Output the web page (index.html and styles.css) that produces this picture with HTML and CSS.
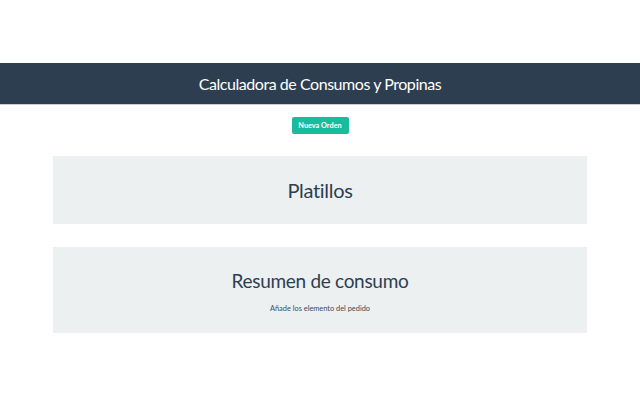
FILE: index.html
```html
<!DOCTYPE html>
<html lang="es">
<head>
<meta charset="utf-8">
<title>Calculadora</title>
<link rel="stylesheet" href="styles.css">
</head>
<body>
<header class="topbar">
  <h1 class="topbar-title">Calculadora de Consumos y Propinas</h1>
</header>
<div class="actions">
  <button class="btn-new">Nueva Orden</button>
</div>
<main class="content">
  <section class="card card-dishes">
    <h2 class="card-title card-title-dishes">Platillos</h2>
  </section>
  <section class="card card-summary">
    <h2 class="card-title">Resumen de consumo</h2>
    <p class="card-note">Añade los elemento del pedido</p>
  </section>
</main>
</body>
</html>
```
FILE: styles.css
```css
html, body {
  margin: 0;
  padding: 0;
  background: #ffffff;
  font-family: Lato, "Open Sans", sans-serif;
  color: #2c3e50;
}
.topbar {
  margin-top: 63px;
  height: 41px;
  background: #2c3e50;
  display: flex;
  align-items: center;
  justify-content: center;
  box-shadow: 0 1px 0 #c9ced3;
}
.topbar-title {
  margin: 0;
  font-size: 16px;
  font-weight: 400;
  letter-spacing: -0.45px;
  color: #ffffff;
}
.actions {
  display: flex;
  justify-content: center;
  padding-top: 13px;
}
.btn-new {
  background: #18bc9c;
  color: #ffffff;
  border: none;
  border-radius: 2px;
  font-family: Lato, sans-serif;
  font-size: 7.3px;
  font-weight: 700;
  width: 57px;
  height: 17px;
  padding: 0;
}
.content {
  width: 534px;
  margin: 22px auto 0;
  display: flex;
  flex-direction: column;
  gap: 23px;
}
.card {
  background: #ecf0f1;
  display: flex;
  flex-direction: column;
  align-items: center;
}
.card-dishes {
  height: 68px;
  justify-content: center;
}
.card-summary {
  height: 86px;
  padding-top: 22px;
  box-sizing: border-box;
}
.card-title {
  margin: 0;
  font-size: 19px;
  font-weight: 400;
  letter-spacing: -0.3px;
  color: #2c3e50;
  line-height: 24px;
}
.card-title-dishes {
  font-size: 20px;
}
.card-note {
  margin: 11px 0 0;
  font-size: 7.4px;
  color: #3c4a5a;
}
```
